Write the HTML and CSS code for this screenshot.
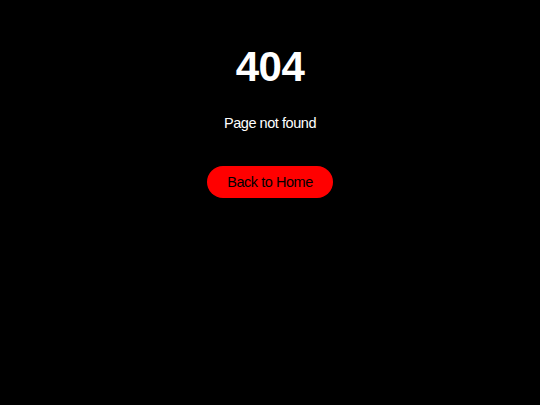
FILE: index.html
```html
<!DOCTYPE html>
<html lang="en">
<head>
    <meta charset="UTF-8">
    <title>404 - Page not found</title>
    <link rel="stylesheet" href="styles.css">
</head>
<body>
    <div class="container">
        <h1>404</h1>
        <p>Page not found</p>
        <a class="home-btn" href="#">Back to Home</a>
    </div>
</body>
</html>
```

FILE: styles.css
```css
body {
    margin: 0;
    height: 100vh;
    background-color: #000;
    font-family: 'Liberation Sans', Arial, sans-serif;
}

.container {
    display: flex;
    flex-direction: column;
    align-items: center;
    padding-top: 42px;
}

h1 {
    margin: 0;
    font-size: 42px;
    line-height: 50px;
    letter-spacing: -0.6px;
    color: #fff;
}

p {
    margin: 22px 0 0;
    font-size: 14.5px;
    line-height: 18px;
    letter-spacing: -0.45px;
    color: #fff;
}

.home-btn {
    margin-top: 34px;
    padding: 7px 20px;
    font-size: 14.5px;
    line-height: 18px;
    letter-spacing: -0.45px;
    color: #000;
    background-color: #ff0000;
    border-radius: 16px;
    text-decoration: none;
}
```
